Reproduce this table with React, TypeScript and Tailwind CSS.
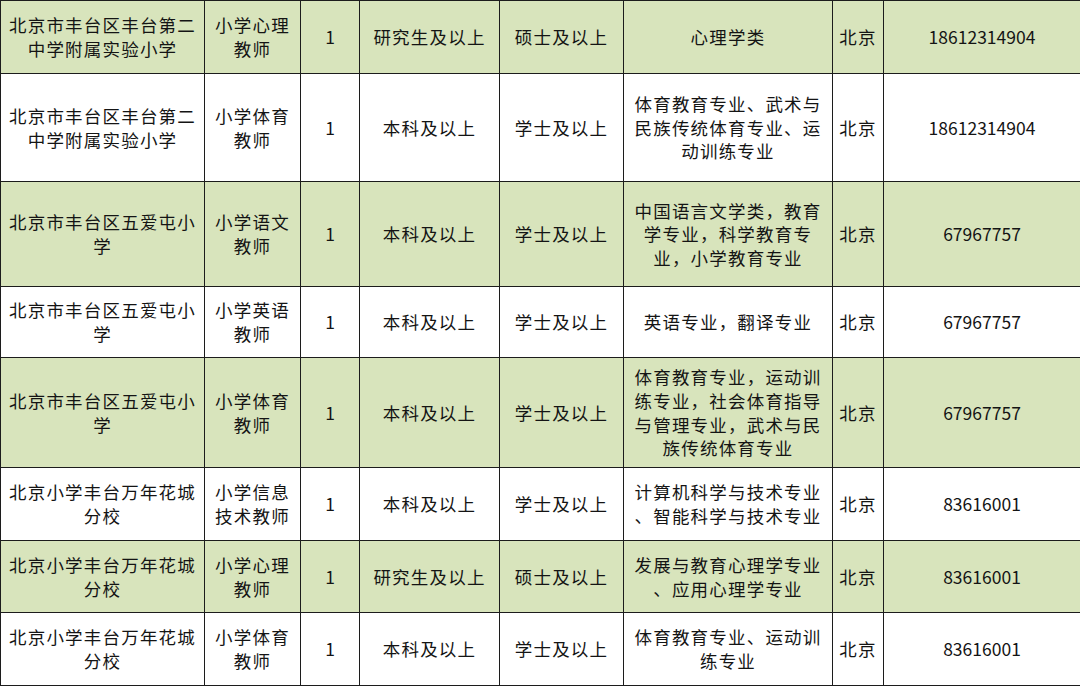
import React from "react";

type Row = {
  h: number;
  green: boolean;
  school: string[];
  post: string[];
  n: string;
  edu: string;
  deg: string;
  major: string[];
  city: string;
  tel: string;
};

const s1 = ["北京市丰台区丰台第二", "中学附属实验小学"];
const s2 = ["北京市丰台区五爱屯小", "学"];
const s3 = ["北京小学丰台万年花城", "分校"];

const rows: Row[] = [
  { h: 73, green: true, school: s1, post: ["小学心理", "教师"], n: "1", edu: "研究生及以上", deg: "硕士及以上", major: ["心理学类"], city: "北京", tel: "18612314904" },
  { h: 108, green: false, school: s1, post: ["小学体育", "教师"], n: "1", edu: "本科及以上", deg: "学士及以上", major: ["体育教育专业、武术与", "民族传统体育专业、运", "动训练专业"], city: "北京", tel: "18612314904" },
  { h: 105, green: true, school: s2, post: ["小学语文", "教师"], n: "1", edu: "本科及以上", deg: "学士及以上", major: ["中国语言文学类，教育", "学专业，科学教育专", "业，小学教育专业"], city: "北京", tel: "67967757" },
  { h: 71, green: false, school: s2, post: ["小学英语", "教师"], n: "1", edu: "本科及以上", deg: "学士及以上", major: ["英语专业，翻译专业"], city: "北京", tel: "67967757" },
  { h: 110, green: true, school: s2, post: ["小学体育", "教师"], n: "1", edu: "本科及以上", deg: "学士及以上", major: ["体育教育专业，运动训", "练专业，社会体育指导", "与管理专业，武术与民", "族传统体育专业"], city: "北京", tel: "67967757" },
  { h: 73, green: false, school: s3, post: ["小学信息", "技术教师"], n: "1", edu: "本科及以上", deg: "学士及以上", major: ["计算机科学与技术专业", "、智能科学与技术专业"], city: "北京", tel: "83616001" },
  { h: 72, green: true, school: s3, post: ["小学心理", "教师"], n: "1", edu: "研究生及以上", deg: "硕士及以上", major: ["发展与教育心理学专业", "、应用心理学专业"], city: "北京", tel: "83616001" },
  { h: 73, green: false, school: s3, post: ["小学体育", "教师"], n: "1", edu: "本科及以上", deg: "学士及以上", major: ["体育教育专业、运动训", "练专业"], city: "北京", tel: "83616001" },
];

const cell =
  "border-[1.5px] border-[#1c1c1c] text-center align-middle leading-[23.6px] text-[17.5px] text-[#141414] p-0";

function Lines({ lines }: { lines: string[] }) {
  return (
    <>
      {lines.map((l, i) => (
        <div key={i} className="whitespace-nowrap">
          {l}
        </div>
      ))}
    </>
  );
}

export default function App() {
  return (
    <div
      className="w-[1080px] h-[686px] bg-white overflow-hidden"
      style={{ fontFamily: '"Noto Sans CJK SC", "Noto Sans", sans-serif' }}
    >
      <table className="w-[1080px] table-fixed border-collapse">
        <colgroup>
          <col className="w-[204px]" />
          <col className="w-[96px]" />
          <col className="w-[59px]" />
          <col className="w-[140px]" />
          <col className="w-[124px]" />
          <col className="w-[209px]" />
          <col className="w-[51px]" />
          <col className="w-[197px]" />
        </colgroup>
        <tbody>
          {rows.map((r, i) => (
            <tr
              key={i}
              className={r.green ? "bg-[#d8e4bc]" : "bg-white"}
              style={{ height: r.h }}
            >
              <td className={`${cell} tracking-[1.2px]`}>
                <Lines lines={r.school} />
              </td>
              <td className={`${cell} tracking-[1.2px]`}>
                <Lines lines={r.post} />
              </td>
              <td className={cell}>{r.n}</td>
              <td className={`${cell} tracking-[1.2px]`}>{r.edu}</td>
              <td className={`${cell} tracking-[1.2px]`}>{r.deg}</td>
              <td className={`${cell} tracking-[1.2px]`}>
                <Lines lines={r.major} />
              </td>
              <td className={`${cell} tracking-[1.2px]`}>{r.city}</td>
              <td className={cell}>{r.tel}</td>
            </tr>
          ))}
        </tbody>
      </table>
    </div>
  );
}
